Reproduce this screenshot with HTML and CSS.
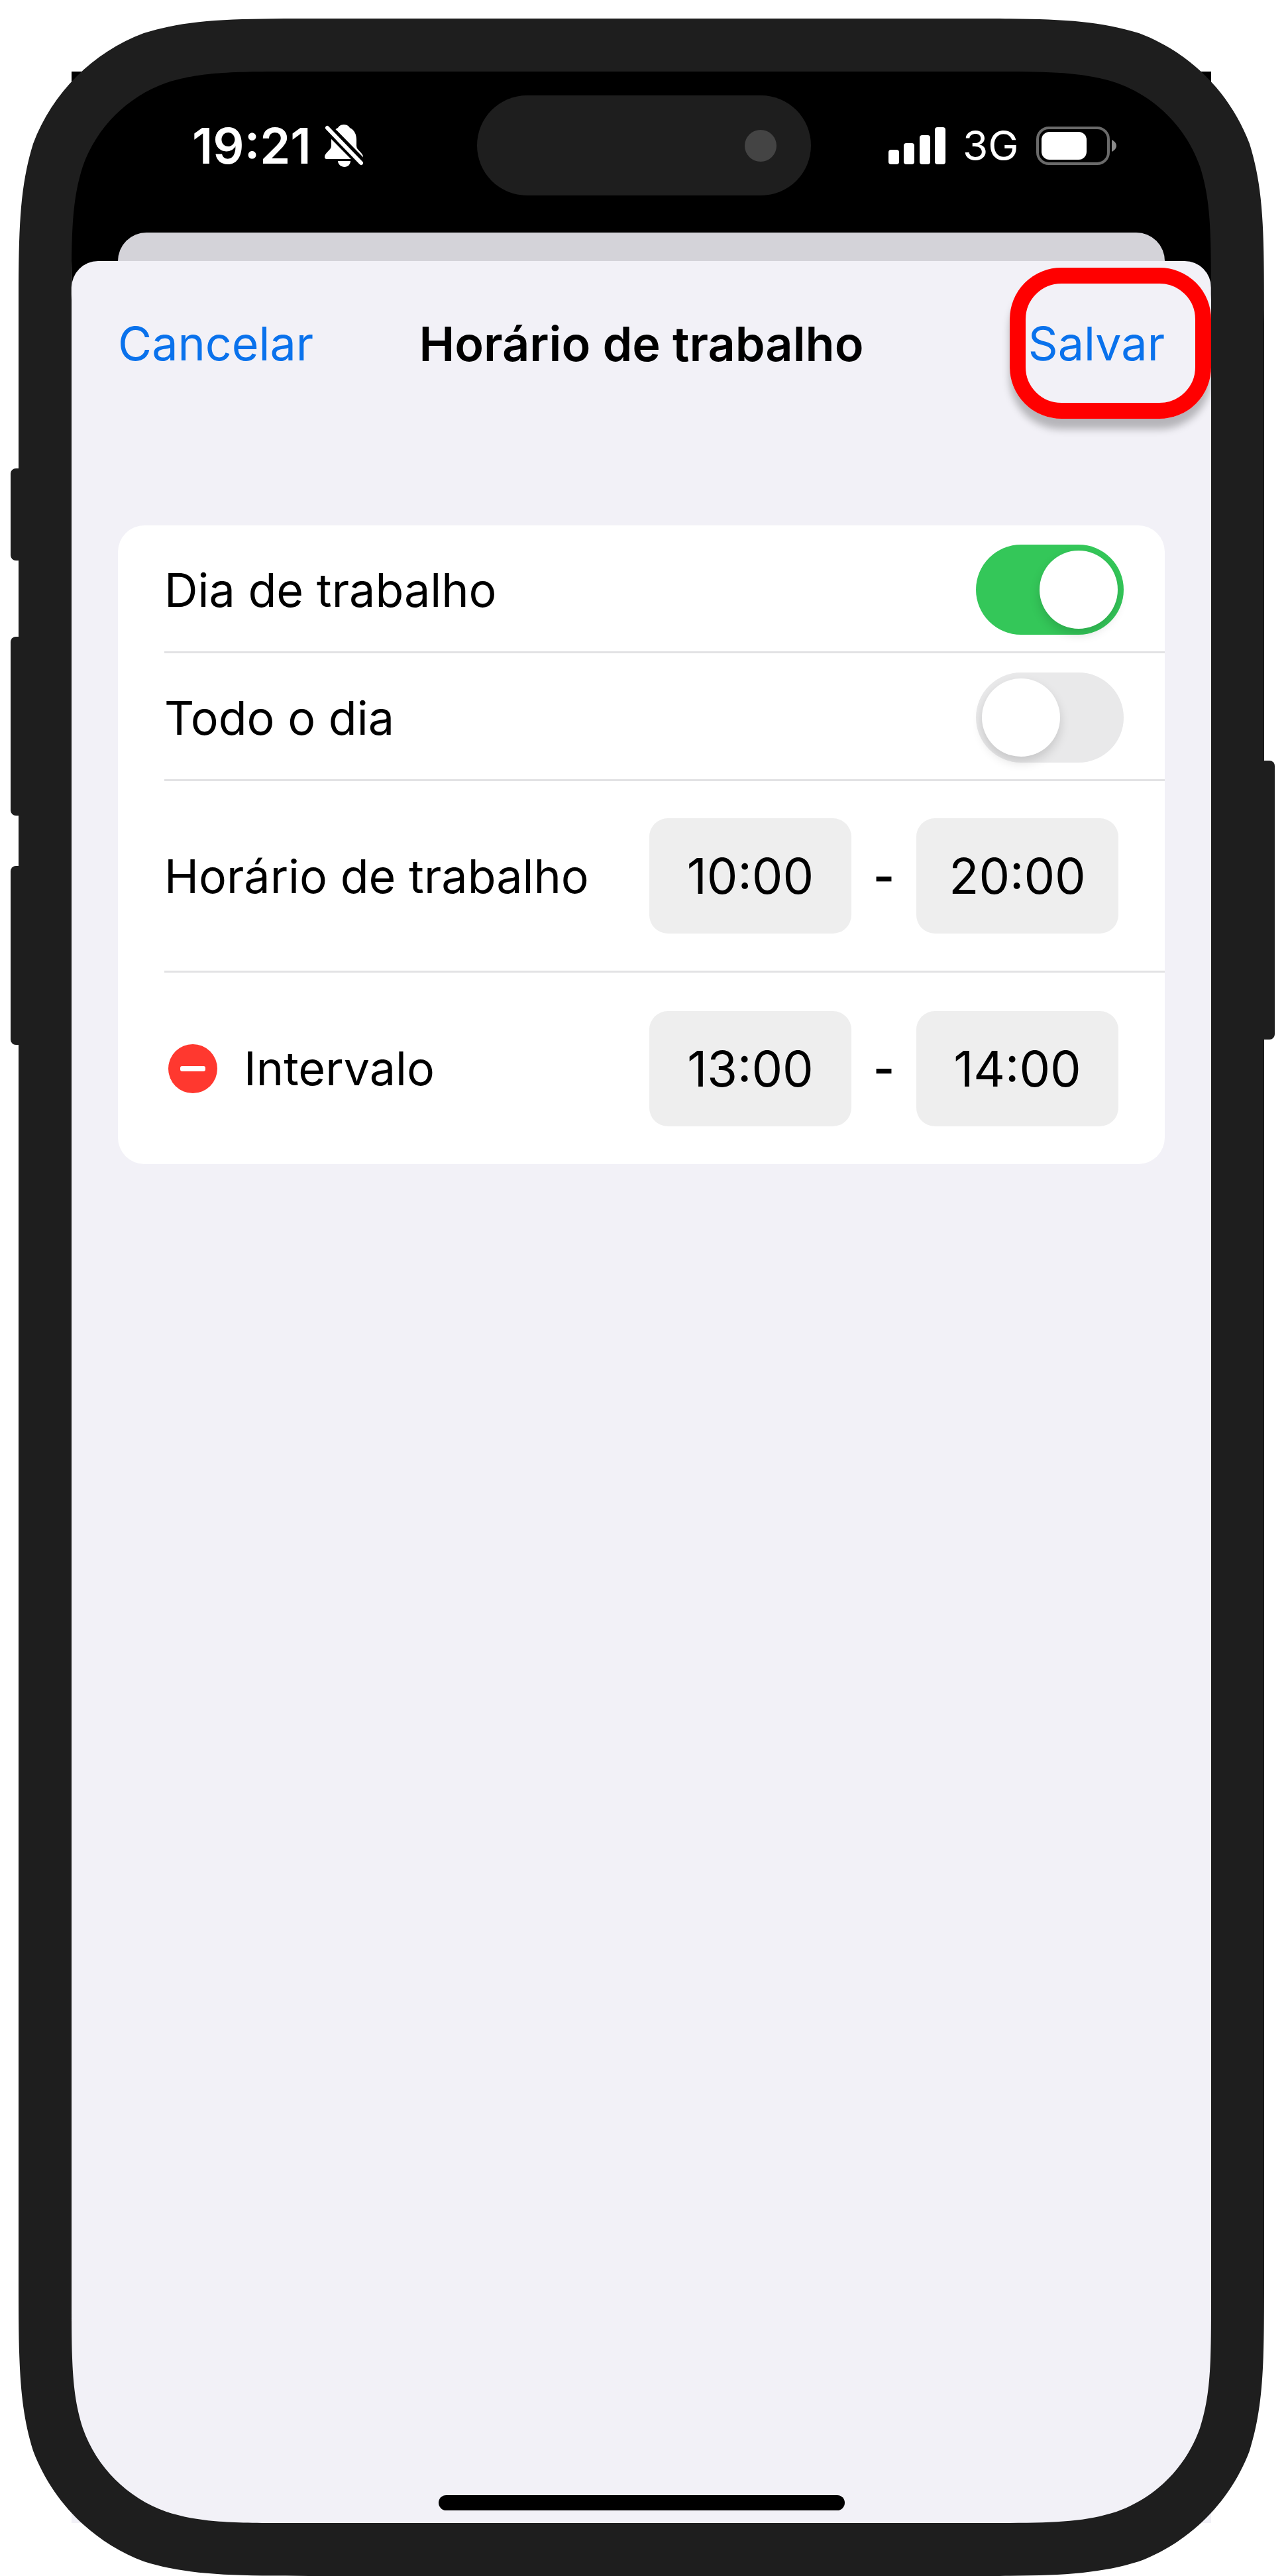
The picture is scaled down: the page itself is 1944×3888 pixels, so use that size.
FILE: index.html
```html
<!DOCTYPE html>
<html lang="pt-BR">
<head>
  <meta charset="UTF-8">
  <meta name="viewport" content="width=device-width, initial-scale=1.0">
  <title>Horário de trabalho</title>
  <link rel="stylesheet" href="styles.css">
</head>
<body>
  <div class="phone">
    <div class="side-button mute"></div>
    <div class="side-button volume-up"></div>
    <div class="side-button volume-down"></div>
    <div class="side-button power"></div>

    <div class="screen">
      <div class="status-bar">
        <div class="status-left">
          <span class="clock">19:21</span>
          <svg class="bell" viewBox="0 0 58 64" width="58" height="64">
            <path fill="#fff" d="M29 0c-5 0-8 3-9 5C13 8 10 15 10 23v9c0 7-10 10-10 17 0 2 1 3 3 3h52c2 0 3-1 3-3 0-7-10-10-10-17v-9c0-8-3-15-10-18-1-2-4-5-9-5zM20 55h19c0 5-4 9-9 9s-10-4-10-9z"/>
            <path stroke="#000" stroke-width="15" d="M-2 -1l64 65"/>
            <path stroke="#fff" stroke-width="6" stroke-linecap="round" d="M4 5l51 53"/>
          </svg>
        </div>
        <div class="island"><span class="camera"></span></div>
        <div class="status-right">
          <svg class="signal" viewBox="0 0 86 56" width="86" height="56" fill="#fff">
            <rect x="0" y="34" width="16" height="22" rx="4"/>
            <rect x="23" y="24" width="16" height="32" rx="4"/>
            <rect x="47" y="12" width="16" height="44" rx="4"/>
            <rect x="70" y="0" width="16" height="56" rx="4"/>
          </svg>
          <span class="network">3G</span>
          <svg class="battery" viewBox="0 0 122 58" width="122" height="58">
            <rect x="2" y="2" width="107" height="54" rx="17" fill="none" stroke="#6a6a6a" stroke-width="4"/>
            <rect x="8" y="8" width="68" height="42" rx="12" fill="#fff"/>
            <path fill="#8a8a8a" d="M114 20c4 2 7 5 7 9s-3 7-7 9z"/>
          </svg>
        </div>
      </div>

      <div class="back-sheet"></div>

      <div class="sheet">
        <div class="nav">
          <button class="nav-button">Cancelar</button>
          <h1>Horário de trabalho</h1>
          <button class="nav-button save">Salvar</button>
          <div class="highlight"></div>
        </div>

        <form class="card">
          <div class="row">
            <label for="workday">Dia de trabalho</label>
            <input class="switch" type="checkbox" id="workday" checked>
          </div>
          <div class="row">
            <label for="allday">Todo o dia</label>
            <input class="switch" type="checkbox" id="allday">
          </div>
          <div class="row tall">
            <label for="work-start">Horário de trabalho</label>
            <div class="times">
              <input class="time" type="text" id="work-start" value="10:00">
              <span>-</span>
              <input class="time" type="text" aria-label="Fim do horário de trabalho" value="20:00">
            </div>
          </div>
          <div class="row tall">
            <button class="remove" type="button" aria-label="Remover intervalo">
              <svg viewBox="0 0 74 74" width="74" height="74">
                <circle cx="37" cy="37" r="37" fill="#ff382f"/>
                <rect x="18" y="33" width="38" height="8" rx="3" fill="#fff"/>
              </svg>
            </button>
            <label for="break-start">Intervalo</label>
            <div class="times">
              <input class="time" type="text" id="break-start" value="13:00">
              <span>-</span>
              <input class="time" type="text" aria-label="Fim do intervalo" value="14:00">
            </div>
          </div>
        </form>

        <div class="home-indicator"></div>
      </div>
    </div>

    <div class="bezel"></div>
  </div>
</body>
</html>
```
FILE: styles.css
```css
* {
  box-sizing: border-box;
}

body {
  margin: 0;
  padding: 28px 36px 0 28px;
  background: #fff;
  color: #000;
  font-family: Inter, "Liberation Sans", sans-serif;
  font-size: 70px;
}

button,
input {
  font: inherit;
  color: inherit;
  border: none;
  padding: 0;
  margin: 0;
  background: none;
}

.phone {
  position: relative;
  display: flex;
  min-height: calc(100vh - 28px);
  padding: 80px;
}

/* Frame drawn over the screen, sliced so the sides stretch */
.bezel {
  position: absolute;
  inset: 0;
  pointer-events: none;
  border: 460px solid transparent;
  border-image: url("data:image/svg+xml,%3Csvg xmlns='http://www.w3.org/2000/svg' width='1000' height='1000' viewBox='0 0 1000 1000'%3E%3Cdefs%3E%3Cpath id='c' fill='%231e1e1e' d='M501 0H459C326 0 260 0 189 22C112 51 51 112 22 189C0 260 0 326 0 459V501H80V425C80 326 80 276 97 223C118 164 164 118 223 97C276 80 326 80 425 80H501Z'/%3E%3C/defs%3E%3Cuse href='%23c'/%3E%3Cuse href='%23c' transform='matrix(-1 0 0 1 1000 0)'/%3E%3Cuse href='%23c' transform='matrix(1 0 0 -1 0 1000)'/%3E%3Cuse href='%23c' transform='matrix(-1 0 0 -1 1000 1000)'/%3E%3C/svg%3E") 460 stretch;
}

/* Hardware buttons */
.side-button {
  position: absolute;
  left: -12px;
  width: 40px;
  height: 270px;
  border-radius: 8px;
  background: #1e1e1e;
}

.mute {
  top: 679px;
  height: 139px;
}

.volume-up {
  top: 933px;
}

.volume-down {
  top: 1279px;
}

.power {
  top: 1120px;
  left: auto;
  right: -16px;
  height: 421px;
}

.screen {
  position: relative;
  flex: 1;
  display: flex;
  flex-direction: column;
  background: #000;
}

/* Status bar */
.status-bar {
  display: grid;
  grid-template-columns: 1fr 504px 1fr;
  align-items: center;
  height: 243px;
  padding: 0 0 20px 8px;
  color: #fff;
}

.status-left {
  display: flex;
  align-items: center;
  gap: 20px;
  padding-left: 174px;
}

.clock {
  font-size: 74px;
  font-weight: 600;
}

.island {
  display: flex;
  align-items: center;
  justify-content: flex-end;
  height: 151px;
  padding-right: 52px;
  border-radius: 76px;
  background: #1e1e1e;
}

.camera {
  width: 48px;
  height: 48px;
  border-radius: 50%;
  background: #444;
}

.status-right {
  display: flex;
  align-items: center;
  gap: 26px;
  padding-left: 117px;
}

.network {
  font-size: 62px;
}

/* Sheets */
.back-sheet {
  height: 43px;
  margin: 0 70px;
  border-radius: 44px 44px 0 0;
  background: #d4d3d9;
}

.sheet {
  flex: 1;
  display: flex;
  flex-direction: column;
  border-radius: 40px 40px 0 0;
  background: #f2f1f7;
}

.nav {
  position: relative;
  display: grid;
  grid-template-columns: 1fr auto 1fr;
  align-items: center;
  height: 248px;
  padding: 0 70px;
}

.nav h1 {
  margin: 0;
  font-size: 72px;
  font-weight: 600;
}

.nav-button {
  justify-self: start;
  color: #0a72ec;
  cursor: pointer;
}

.save {
  justify-self: end;
}

.highlight {
  position: absolute;
  top: 10px;
  right: 0;
  width: 304px;
  height: 228px;
  border: 24px solid #f00;
  border-radius: 78px;
  box-shadow: 0 16px 12px rgba(0, 0, 0, 0.25);
  pointer-events: none;
}

/* Settings card */
.card {
  margin: 151px 70px 0;
  padding-left: 70px;
  border-radius: 40px;
  background: #fff;
}

.row {
  display: flex;
  align-items: center;
  height: 193px;
  padding: 4px 62px 0 0;
  border-bottom: 3px solid #e2e2e4;
}

.row label {
  flex: 1;
}

.row:last-child {
  border-bottom: none;
}

.tall {
  height: 289px;
  padding: 0 70px 0 0;
}

.switch {
  appearance: none;
  width: 223px;
  height: 136px;
  padding: 9px;
  border-radius: 68px;
  background: #e9e9ea;
  cursor: pointer;
}

.switch::before {
  content: "";
  display: block;
  width: 118px;
  height: 118px;
  border-radius: 50%;
  background: #fff;
  box-shadow: 0 8px 16px rgba(0, 0, 0, 0.15);
}

.switch:checked {
  background: #34c759;
}

.switch:checked::before {
  margin-left: auto;
}

.times {
  display: flex;
  align-items: center;
}

.times span {
  width: 98px;
  text-align: center;
  font-weight: 600;
}

.time {
  width: 305px;
  height: 174px;
  border-radius: 28px;
  background: #eee;
  font-size: 74px;
  text-align: center;
}

.remove {
  display: flex;
  margin: 0 40px 0 6px;
  cursor: pointer;
}

.home-indicator {
  width: 613px;
  height: 23px;
  margin: auto auto 19px;
  border-radius: 12px;
  background: #000;
}
```
